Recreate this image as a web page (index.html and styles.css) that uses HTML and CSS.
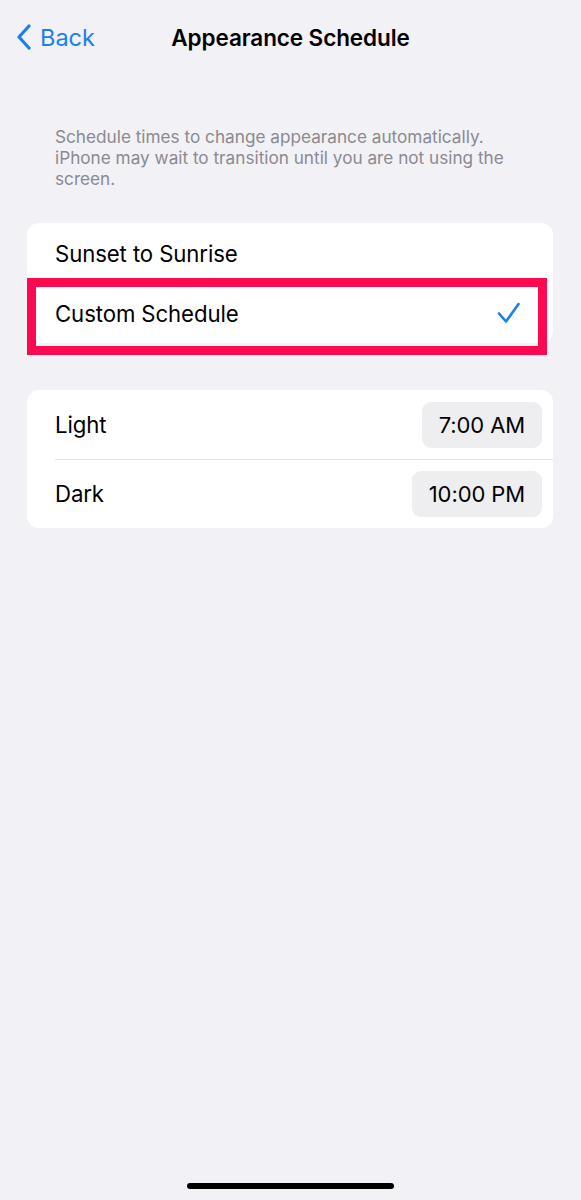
FILE: index.html
```html
<!DOCTYPE html>
<html lang="en">
<head>
    <meta charset="UTF-8">
    <meta name="viewport" content="width=device-width, initial-scale=1.0">
    <title>Appearance Schedule</title>
    <link rel="stylesheet" href="styles.css">
</head>
<body>
    <div class="screen">
        <div class="nav">
            <a class="back" href="#">
                <svg class="chevron" width="16" height="26" viewBox="0 0 16 26">
                    <polyline points="13,2 3,13 13,24" fill="none" stroke="#1a7ff0" stroke-width="3.2" stroke-linecap="round" stroke-linejoin="round"/>
                </svg>
                <span>Back</span>
            </a>
            <h1>Appearance Schedule</h1>
            <div></div>
        </div>

        <p class="note">Schedule times to change appearance automatically. iPhone may wait to transition until you are not using the screen.</p>

        <div class="card">
            <div class="row">
                <span>Sunset to Sunrise</span>
            </div>
            <div class="row selected">
                <span>Custom Schedule</span>
                <svg class="check" width="24" height="22" viewBox="0 0 24 22">
                    <polyline points="2,11.5 9,19.5 21.5,2" fill="none" stroke="#1a7ff0" stroke-width="2.6" stroke-linecap="round" stroke-linejoin="round"/>
                </svg>
                <div class="highlight"></div>
            </div>
        </div>

        <div class="card times">
            <div class="row tall">
                <span>Light</span>
                <span class="pill">7:00 AM</span>
            </div>
            <div class="row tall">
                <span>Dark</span>
                <span class="pill">10:00 PM</span>
            </div>
        </div>

        <div class="home-bar"></div>
    </div>
</body>
</html>
```

FILE: styles.css
```css
* {
    margin: 0;
    padding: 0;
    box-sizing: border-box;
    font-family: Inter, 'Noto Sans', sans-serif;
}

body {
    background: #f2f1f6;
    color: #000;
}

.screen {
    min-height: 100vh;
    display: flex;
    flex-direction: column;
}

.nav {
    height: 74px;
    display: grid;
    grid-template-columns: 1fr auto 1fr;
    align-items: center;
}

.back {
    display: flex;
    align-items: center;
    gap: 8px;
    margin-left: 16px;
    color: #1a7ff0;
    text-decoration: none;
    font-size: 23.5px;
}

.chevron {
    display: block;
}

.nav h1 {
    font-size: 22.5px;
    font-weight: 600;
    letter-spacing: -0.1px;
}

.note {
    margin: 52px 40px 0 55px;
    color: #8b8a90;
    font-size: 17.2px;
    line-height: 21px;
}

.card {
    margin: 34px 28px 0 27px;
    background: #fff;
    border-radius: 12px;
}

.row {
    position: relative;
    height: 60px;
    display: flex;
    align-items: center;
    justify-content: space-between;
    padding: 0 32px 0 28px;
    font-size: 22.2px;
    letter-spacing: -0.1px;
}

.check {
    display: block;
}

/* red annotation box laid over the selected row */
.highlight {
    position: absolute;
    left: 0;
    right: 6px;
    top: -5px;
    bottom: -12px;
    border: 9px solid #fb0a52;
}

.times {
    margin-top: 47px;
}

.row.tall {
    height: 69px;
    padding-right: 11px;
}

.row.tall + .row.tall::before {
    content: '';
    position: absolute;
    top: 0;
    left: 28px;
    right: 0;
    border-top: 1px solid #e4e4e8;
}

.pill {
    background: #eeeef0;
    border-radius: 9px;
    height: 46px;
    display: flex;
    align-items: center;
    padding: 0 17px;
    font-size: 22px;
}

.home-bar {
    margin: auto auto 11px;
    width: 207px;
    height: 6px;
    border-radius: 3px;
    background: #000;
}
```
